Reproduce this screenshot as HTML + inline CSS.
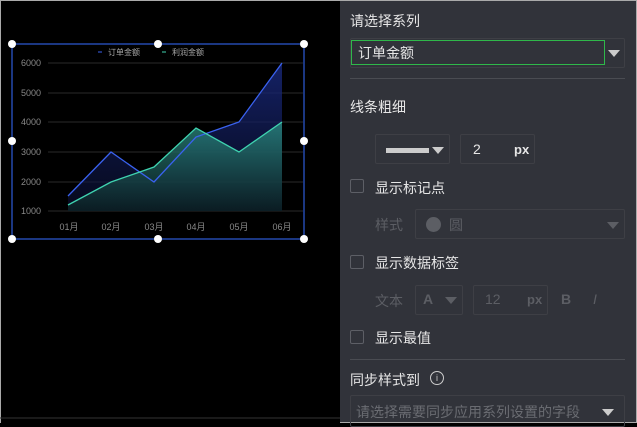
<!DOCTYPE html>
<html><head><meta charset="utf-8"><style>
*{box-sizing:border-box;margin:0;padding:0}
body{width:637px;height:423px;background:#000;font-family:"Liberation Sans","Noto Sans CJK SC",sans-serif;position:relative;overflow:hidden}
.left{position:absolute;left:0;top:0;width:340px;height:423px;background:#000;border-top:1px solid #aaa;border-left:1px solid #aaa}
.right{position:absolute;left:340px;top:0;width:297px;height:423px;background:#31333a;border-top:1px solid #aaa;border-right:1px solid #aaa;border-bottom:1px solid #aaa;color:#e6e6e6;font-size:14px}
.a{position:absolute}
.box{position:absolute;border:1px solid #3e3f45;border-radius:2px}
.cb{position:absolute;width:14px;height:14px;border:1px solid #5d5f66;border-radius:2px}
.tri{position:absolute;width:0;height:0;border-left:6px solid transparent;border-right:6px solid transparent;border-top:7px solid #ccc}
.dim{color:#5c5e64}
</style></head><body>
<div class="left">
<svg width="340" height="423" style="position:absolute;left:-1px;top:-1px">
<defs>
<linearGradient id="g1" x1="0" y1="0" x2="0" y2="1"><stop offset="0" stop-color="#1a2a80" stop-opacity=".8"/><stop offset="1" stop-color="#0a0f30" stop-opacity=".6"/></linearGradient>
<linearGradient id="g2" x1="0" y1="0" x2="0" y2="1"><stop offset="0" stop-color="#2a8a80" stop-opacity=".8"/><stop offset="1" stop-color="#0c2024" stop-opacity=".8"/></linearGradient>
</defs>
<g stroke="#2a2a2a" stroke-width="1">
<line x1="48" y1="63" x2="303" y2="63"/><line x1="48" y1="93" x2="303" y2="93"/><line x1="48" y1="122" x2="303" y2="122"/><line x1="48" y1="152" x2="303" y2="152"/><line x1="48" y1="182" x2="303" y2="182"/><line x1="48" y1="211" x2="303" y2="211"/>
</g>
<polygon points="68,196 111,152 154,182 196,137 239,122 282,63 282,211 68,211" fill="url(#g1)"/>
<polygon points="68,205 111,182 154,167 196,128 239,152 282,122 282,211 68,211" fill="url(#g2)"/>
<polyline points="68,196 111,152 154,182 196,137 239,122 282,63" fill="none" stroke="#3a62f0" stroke-width="1.3"/>
<polyline points="68,205 111,182 154,167 196,128 239,152 282,122" fill="none" stroke="#3fd3b0" stroke-width="1.3"/>
<g fill="#888" font-size="9" font-family="Liberation Sans,Noto Sans CJK SC,sans-serif" text-anchor="end">
<text x="41" y="66">6000</text><text x="41" y="96">5000</text><text x="41" y="125">4000</text><text x="41" y="155">3000</text><text x="41" y="185">2000</text><text x="41" y="214">1000</text>
</g>
<g fill="#888" font-size="9" font-family="Liberation Sans,Noto Sans CJK SC,sans-serif" text-anchor="middle">
<text x="69" y="230">01月</text><text x="111" y="230">02月</text><text x="154" y="230">03月</text><text x="196" y="230">04月</text><text x="239" y="230">05月</text><text x="282" y="230">06月</text>
</g>
<line x1="98" y1="52" x2="102" y2="52" stroke="#3a62f0"/><text x="108" y="55" fill="#aaa" font-size="8" font-family="Noto Sans CJK SC,sans-serif">订单金额</text>
<line x1="162" y1="52" x2="166" y2="52" stroke="#3fd3b0"/><text x="172" y="55" fill="#aaa" font-size="8" font-family="Noto Sans CJK SC,sans-serif">利润金额</text>
<rect x="12" y="44" width="292" height="195" fill="none" stroke="#2a55c8" stroke-width="1.3"/>
<g fill="#fff"><circle cx="12" cy="44" r="4"/><circle cx="158" cy="44" r="4"/><circle cx="304" cy="44" r="4"/><circle cx="12" cy="141" r="4"/><circle cx="304" cy="141" r="4"/><circle cx="12" cy="239" r="4"/><circle cx="158" cy="239" r="4"/><circle cx="304" cy="239" r="4"/></g>
<line x1="0" y1="418" x2="340" y2="418" stroke="#333"/>
</svg>
</div>
<div class="right">
<div class="a" style="left:10px;top:10px">请选择系列</div>
<div class="box" style="left:10px;top:37px;width:275px;height:30px"></div>
<div class="a" style="left:11px;top:39px;width:254px;height:25px;border:1px solid #2fb84a"></div>
<div class="a" style="left:18px;top:42px">订单金额</div>
<div class="tri" style="left:268px;top:49px"></div>
<div class="a" style="left:10px;top:77px;width:275px;height:1px;background:#4a4c52"></div>
<div class="a" style="left:10px;top:96px">线条粗细</div>
<div class="box" style="left:35px;top:133px;width:75px;height:30px"></div>
<div class="a" style="left:46px;top:147px;width:43px;height:5px;background:#ccc"></div>
<div class="tri" style="left:92px;top:146px"></div>
<div class="box" style="left:120px;top:133px;width:75px;height:30px"></div>
<div class="a" style="left:133px;top:140px">2</div>
<div class="a" style="left:174px;top:141px;font-weight:bold;font-size:13px">px</div>
<div class="cb" style="left:10px;top:178px"></div>
<div class="a" style="left:35px;top:177px">显示标记点</div>
<div class="a dim" style="left:35px;top:214px">样式</div>
<div class="box" style="left:75px;top:208px;width:210px;height:30px"></div>
<div class="a" style="left:86px;top:216px;width:15px;height:15px;border-radius:50%;background:#5c5e64"></div>
<div class="a dim" style="left:109px;top:214px">圆</div>
<div class="tri" style="left:267px;top:221px;border-top-color:#5c5e64"></div>
<div class="cb" style="left:10px;top:254px"></div>
<div class="a" style="left:35px;top:252px">显示数据标签</div>
<div class="a dim" style="left:35px;top:290px">文本</div>
<div class="box" style="left:75px;top:284px;width:48px;height:30px"></div>
<div class="a dim" style="left:83px;top:290px;font-weight:bold">A</div>
<div class="tri" style="left:105px;top:296px;border-top-color:#5c5e64"></div>
<div class="box" style="left:133px;top:284px;width:75px;height:30px"></div>
<div class="a dim" style="left:145px;top:290px">12</div>
<div class="a dim" style="left:187px;top:291px;font-weight:bold;font-size:13px">px</div>
<div class="a dim" style="left:221px;top:290px;font-weight:bold">B</div>
<div class="a dim" style="left:253px;top:290px;font-style:italic">I</div>
<div class="cb" style="left:10px;top:329px"></div>
<div class="a" style="left:35px;top:327px">显示最值</div>
<div class="a" style="left:10px;top:358px;width:275px;height:1px;background:#4a4c52"></div>
<div class="a" style="left:10px;top:369px">同步样式到</div>
<div class="a" style="left:90px;top:370px;width:14px;height:14px;border:1px solid #ccc;border-radius:50%;font-size:9px;text-align:center;line-height:12px;color:#ccc">i</div>
<div class="box" style="left:10px;top:394px;width:275px;height:32px"></div>
<div class="a dim" style="left:16px;top:401px;color:#6a6c72">请选择需要同步应用系列设置的字段</div>
<div class="tri" style="left:262px;top:408px"></div>
</div>
</body></html>
